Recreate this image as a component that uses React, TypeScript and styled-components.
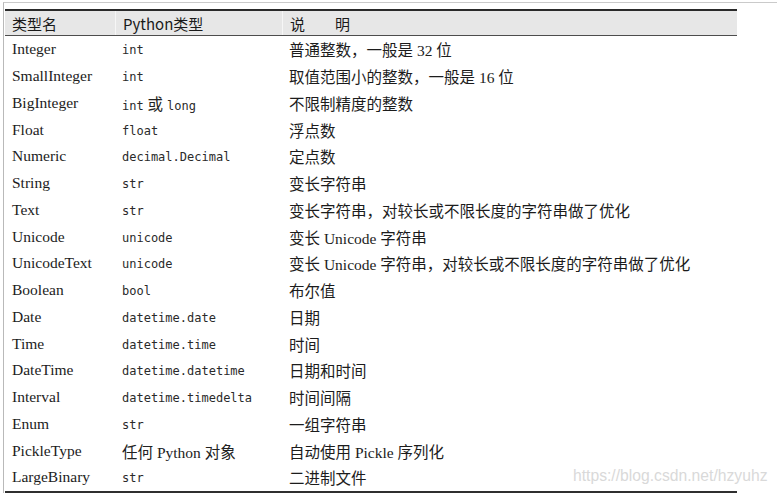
import React from "react";
import styled, { createGlobalStyle } from "styled-components";

type Part = { text: string; code?: boolean };

interface RowData {
  name: string;
  python: Part[];
  desc: string;
}

const c = (text: string): Part => ({ text, code: true });
const t = (text: string): Part => ({ text });

const rows: RowData[] = [
  { name: "Integer", python: [c("int")], desc: "普通整数，一般是 32 位" },
  { name: "SmallInteger", python: [c("int")], desc: "取值范围小的整数，一般是 16 位" },
  { name: "BigInteger", python: [c("int"), t(" 或 "), c("long")], desc: "不限制精度的整数" },
  { name: "Float", python: [c("float")], desc: "浮点数" },
  { name: "Numeric", python: [c("decimal.Decimal")], desc: "定点数" },
  { name: "String", python: [c("str")], desc: "变长字符串" },
  { name: "Text", python: [c("str")], desc: "变长字符串，对较长或不限长度的字符串做了优化" },
  { name: "Unicode", python: [c("unicode")], desc: "变长 Unicode 字符串" },
  {
    name: "UnicodeText",
    python: [c("unicode")],
    desc: "变长 Unicode 字符串，对较长或不限长度的字符串做了优化",
  },
  { name: "Boolean", python: [c("bool")], desc: "布尔值" },
  { name: "Date", python: [c("datetime.date")], desc: "日期" },
  { name: "Time", python: [c("datetime.time")], desc: "时间" },
  { name: "DateTime", python: [c("datetime.datetime")], desc: "日期和时间" },
  { name: "Interval", python: [c("datetime.timedelta")], desc: "时间间隔" },
  { name: "Enum", python: [c("str")], desc: "一组字符串" },
  { name: "PickleType", python: [t("任何 Python 对象")], desc: "自动使用 Pickle 序列化" },
  { name: "LargeBinary", python: [c("str")], desc: "二进制文件" },
];

const GlobalStyle = createGlobalStyle`
  html, body {
    margin: 0;
    padding: 0;
    background: #ffffff;
  }
  body {
    font-family: "Liberation Serif", "Noto Sans CJK SC", serif;
  }
`;

export default function App() {
  return (
    <>
      <GlobalStyle />
      <Frame>
        <Table>
          <HeaderRow>
            <HeadCell>类型名</HeadCell>
            <HeadCell>Python类型</HeadCell>
            <HeadCell last>说　　明</HeadCell>
          </HeaderRow>
          <Body>
            {rows.map((row) => (
              <Row key={row.name}>
                <NameCell>{row.name}</NameCell>
                <TypeCell>
                  {row.python.map((p, i) =>
                    p.code ? <Code key={i}>{p.text}</Code> : <span key={i}>{p.text}</span>
                  )}
                </TypeCell>
                <DescCell>{row.desc}</DescCell>
              </Row>
            ))}
          </Body>
        </Table>
        <Watermark>https://blog.csdn.net/hzyuhz</Watermark>
      </Frame>
    </>
  );
}

const Frame = styled.div`
  position: relative;
  margin: 2px 0 0 3px;
  height: 491px;
  border-top: 1px solid #cacaca;
  border-left: 1px solid #b9b9b9;
  box-sizing: border-box;
  overflow: hidden;
`;

const Table = styled.div`
  margin: 6px 0 0 1px;
  width: 732px;
  border-top: 2px solid #2a2a2a;
  border-bottom: 2px solid #2f2f2f;
`;

const HeaderRow = styled.div`
  display: grid;
  grid-template-columns: 111px 167px 1fr;
  height: 24px;
  background: #e7e7e7;
  border-bottom: 1px solid #4d4d4d;
`;

const HeadCell = styled.div<{ last?: boolean }>`
  display: flex;
  align-items: center;
  padding-left: 7px;
  font-family: "Noto Sans CJK SC", "Noto Sans", sans-serif;
  font-size: 15px;
  color: #1a1a1a;
  border-right: ${(p) => (p.last ? "none" : "1px solid #f6f6f6")};
  white-space: nowrap;
`;

const Body = styled.div`
  display: flex;
  flex-direction: column;
`;

const Row = styled.div`
  display: grid;
  grid-template-columns: 111px 167px 1fr;
  height: 26.75px;
  align-items: center;
`;

const NameCell = styled.div`
  padding-left: 7px;
  font-family: "Liberation Serif", serif;
  font-size: 15.5px;
  color: #1c1c1c;
  white-space: nowrap;
`;

const TypeCell = styled.div`
  padding-left: 6px;
  font-family: "Liberation Serif", "Noto Sans CJK SC", serif;
  font-size: 15.5px;
  color: #222;
  white-space: nowrap;
`;

const Code = styled.span`
  font-family: "DejaVu Sans Mono", monospace;
  font-size: 12px;
  color: #2a2a2a;
`;

const DescCell = styled.div`
  padding-left: 6px;
  font-family: "Liberation Serif", "Noto Sans CJK SC", serif;
  font-size: 15.5px;
  color: #1c1c1c;
  white-space: nowrap;
`;

const Watermark = styled.div`
  position: absolute;
  left: 569px;
  top: 464px;
  font-family: "Liberation Sans", sans-serif;
  font-size: 15.7px;
  color: #d9d9d9;
  white-space: nowrap;
  pointer-events: none;
`;
